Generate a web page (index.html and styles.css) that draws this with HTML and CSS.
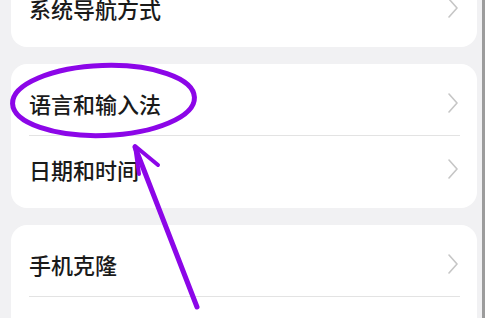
FILE: index.html
```html
<!DOCTYPE html>
<html lang="zh-CN">
<head>
  <meta charset="UTF-8" />
  <meta name="viewport" content="width=device-width, initial-scale=1.0"/>
  <title>设置</title>
  <link rel="stylesheet" href="styles.css">
</head>
<body>
  <div class="screen">
    <div class="list">
      <div class="card">
        <div class="row">
          <span class="label">系统导航方式</span>
          <svg class="chevron" viewBox="0 0 12 20"><path d="M2 1 L10 10 L2 19"/></svg>
        </div>
      </div>

      <div class="card">
        <div class="row">
          <span class="label">语言和输入法</span>
          <svg class="chevron" viewBox="0 0 12 20"><path d="M2 1 L10 10 L2 19"/></svg>
        </div>
        <div class="row">
          <span class="label">日期和时间</span>
          <svg class="chevron" viewBox="0 0 12 20"><path d="M2 1 L10 10 L2 19"/></svg>
        </div>
      </div>

      <div class="card">
        <div class="row">
          <span class="label">手机克隆</span>
          <svg class="chevron" viewBox="0 0 12 20"><path d="M2 1 L10 10 L2 19"/></svg>
        </div>
        <!-- next row starts below the fold -->
        <div class="row"></div>
      </div>
    </div>

    <!-- hand-drawn annotation on top of the screenshot -->
    <svg class="markup" viewBox="0 0 485 318">
      <ellipse cx="103.5" cy="100.5" rx="91" ry="35" transform="rotate(-2 103.5 100.5)"/>
      <path d="M197 307 L135 147"/>
      <path class="head" d="M158 165 L135 146 L139 174"/>
    </svg>
  </div>
</body>
</html>
```

FILE: styles.css
```css
body {
  margin: 0;
  background: #f1f1f3;
  font-family: "Noto Sans CJK SC", "Noto Sans", sans-serif;
  overflow: hidden;
}

.screen {
  position: relative;
  width: 485px;
  height: 318px;
  box-sizing: border-box;
  border-right: 3px solid #9c9c9c;
  overflow: hidden;
}

.list {
  display: flex;
  flex-direction: column;
  gap: 17px;
  margin: -31px 5px 0 11px;
}

.card {
  background: #ffffff;
  border-radius: 16px;
  padding: 6px 0;
}

.row {
  display: flex;
  align-items: center;
  justify-content: space-between;
  height: 66px;
  margin: 0 17px 0 18px;
  border-bottom: 1px solid #e3e3e3;
  box-sizing: border-box;
}

.row:last-child {
  border-bottom: none;
}

.label {
  font-size: 22px;
  font-weight: 500;
  color: #1a1a1a;
  line-height: 1;
}

.chevron {
  width: 12px;
  height: 20px;
  margin-right: 1px;
}

.chevron path {
  fill: none;
  stroke: #c6c6c6;
  stroke-width: 1.6;
  stroke-linecap: round;
  stroke-linejoin: round;
}

.markup {
  position: absolute;
  left: 0;
  top: 0;
  width: 485px;
  height: 318px;
  pointer-events: none;
}

.markup ellipse,
.markup path {
  fill: none;
  stroke: #8c06e8;
  stroke-width: 5;
  stroke-linecap: round;
  stroke-linejoin: round;
}

.markup .head {
  stroke-width: 4;
}
```
